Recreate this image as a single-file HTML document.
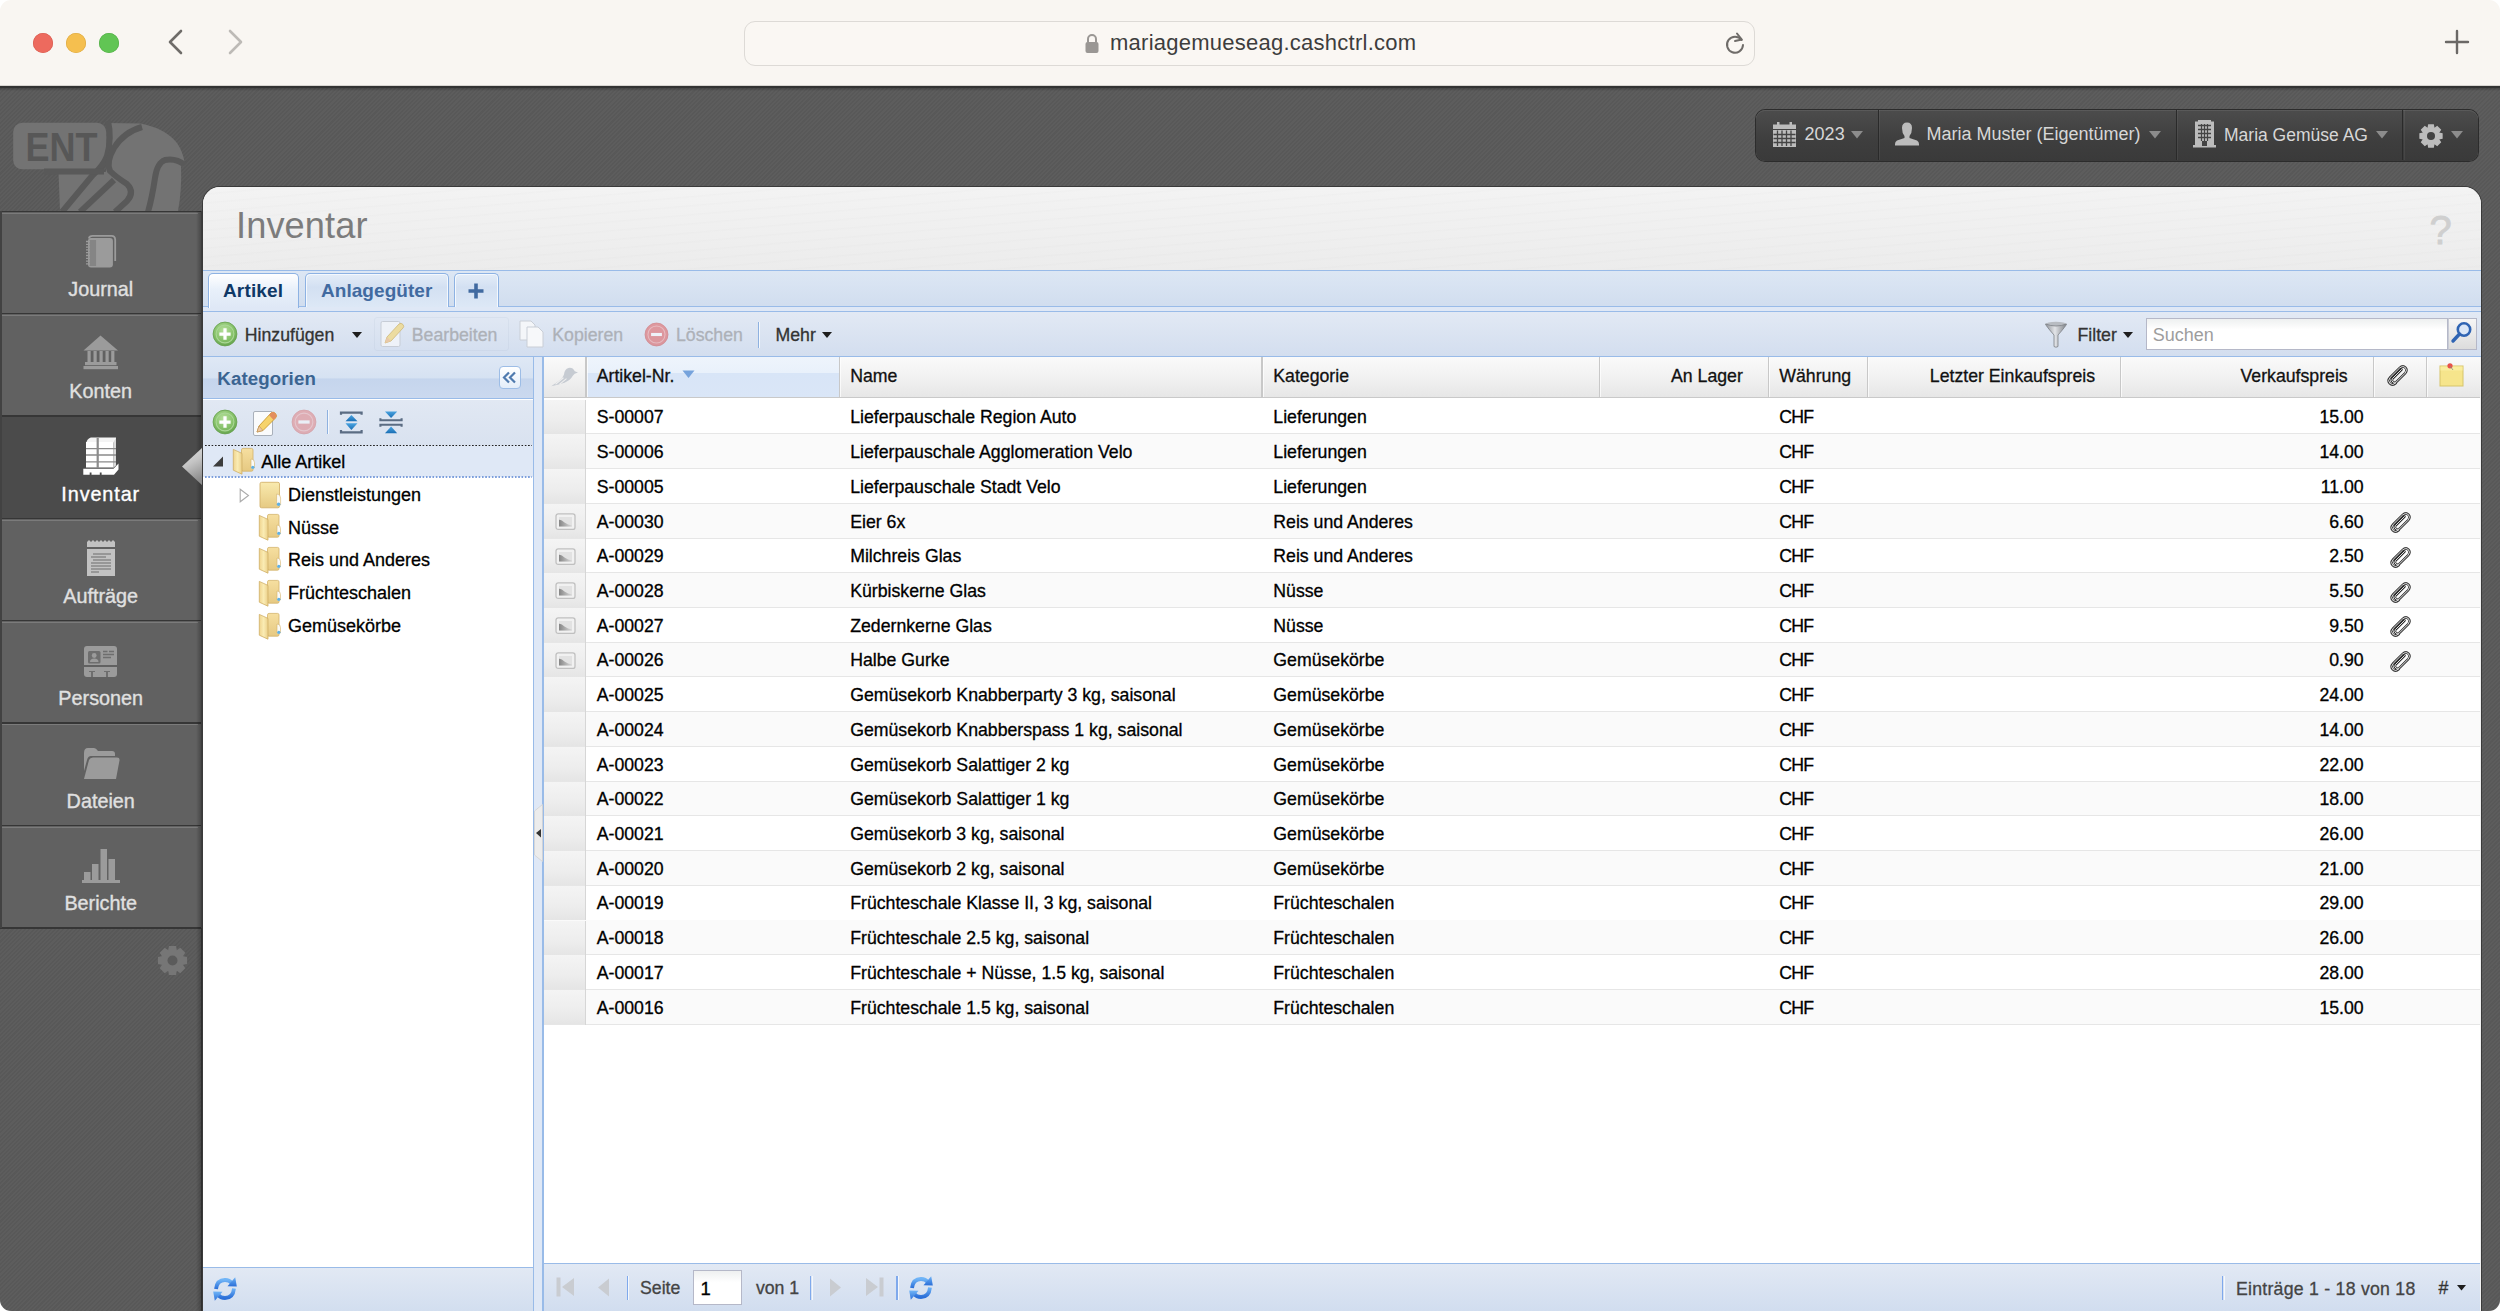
<!DOCTYPE html>
<html><head><meta charset="utf-8"><title>Inventar</title>
<style>
html,body{margin:0;padding:0;}
body{width:2500px;height:1311px;position:relative;overflow:hidden;background:#585858;font-family:"Liberation Sans",sans-serif;}
.t{position:absolute;white-space:nowrap;}
.g{-webkit-text-stroke:0.3px currentColor;}
.r{position:absolute;}
svg.r{overflow:visible;}
</style></head><body>

<div class="r" style="left:0.00px;top:0.00px;width:2500.00px;height:86.00px;background:#f9f6f2;"></div>
<div class="r" style="left:0.00px;top:85.00px;width:2500.00px;height:1.00px;background:#d8d5d1;"></div>
<div class="r" style="left:33.00px;top:33.00px;width:20.00px;height:20.00px;border-radius:50%;background:#ed6a5e;box-shadow:inset 0 0 0 0.6px #d65a4e;"></div>
<div class="r" style="left:66.00px;top:33.00px;width:20.00px;height:20.00px;border-radius:50%;background:#f5bf4f;box-shadow:inset 0 0 0 0.6px #dba73f;"></div>
<div class="r" style="left:99.00px;top:33.00px;width:20.00px;height:20.00px;border-radius:50%;background:#61c554;box-shadow:inset 0 0 0 0.6px #52ab45;"></div>
<svg class="r" style="left:165.00px;top:28.00px;" width="22" height="28" viewBox="0 0 22 28"><path d="M16 3 L5 14 L16 25" fill="none" stroke="#6f6c69" stroke-width="2.6" stroke-linecap="round" stroke-linejoin="round"/></svg>
<svg class="r" style="left:225.00px;top:28.00px;" width="22" height="28" viewBox="0 0 22 28"><path d="M5 3 L16 14 L5 25" fill="none" stroke="#bdbab6" stroke-width="2.6" stroke-linecap="round" stroke-linejoin="round"/></svg>
<div class="r" style="left:744.00px;top:20.50px;width:1011.00px;height:45.00px;border:1.5px solid #dddad6;border-radius:11px;box-sizing:border-box;background:#faf7f3;"></div>
<svg class="r" style="left:1084.00px;top:33.00px;" width="16" height="21" viewBox="0 0 16 21"><path d="M4 9 V6 A4 4 0 0 1 12 6 V9" fill="none" stroke="#9a9794" stroke-width="2"/><rect x="1.5" y="9" width="13" height="11" rx="2" fill="#9a9794"/></svg>
<div class="t " style="left:1110.00px;top:29.37px;font-size:22px;line-height:28px;color:#3d3d3d;font-weight:normal;letter-spacing:0.25px;">mariagemueseag.cashctrl.com</div>
<svg class="r" style="left:1724.00px;top:31.00px;" width="23" height="24" viewBox="0 0 23 24"><path d="M17.5 9 A8 8 0 1 0 19 14" fill="none" stroke="#6f6c69" stroke-width="2" stroke-linecap="round"/><path d="M13 2.5 L17.8 8.6 L11 10" fill="none" stroke="#6f6c69" stroke-width="2" stroke-linecap="round" stroke-linejoin="round"/></svg>
<svg class="r" style="left:2444.00px;top:29.00px;" width="26" height="26" viewBox="0 0 26 26"><path d="M13 2 V24 M2 13 H24" stroke="#6b6866" stroke-width="2.4" stroke-linecap="round"/></svg>
<div class="r" style="left:0.00px;top:86.00px;width:2500.00px;height:1225.00px;background:repeating-linear-gradient(135deg,rgba(255,255,255,0.018) 0px,rgba(255,255,255,0.018) 1.5px,rgba(0,0,0,0.02) 1.5px,rgba(0,0,0,0.02) 3px),#5a5a5a;"></div>
<div class="r" style="left:0.00px;top:86.00px;width:2500.00px;height:1.50px;background:#333;"></div>
<div class="r" style="left:0.00px;top:87.50px;width:2500.00px;height:3.00px;background:linear-gradient(rgba(0,0,0,0.25),rgba(0,0,0,0));"></div>
<svg class="r" style="left:0.00px;top:110.00px;" width="200" height="105" viewBox="0 110 200 105"><rect x="13.2" y="122.8" width="93" height="46.5" rx="9" fill="#737373"/><text x="25.5" y="161" font-family="Liberation Sans" font-weight="bold" font-size="41" fill="#575757" textLength="72" lengthAdjust="spacingAndGlyphs">ENT</text><path d="M58.5 172 L106 172 L107 123 L140 123.5 Q165 128 177 143 Q183 152 184.5 162 L184 167 L181 166 Q182 190 178 211 L60 211 Z" fill="#737373"/><g fill="none" stroke="#595959" stroke-width="6" stroke-linejoin="round"><path d="M108 121 Q112 138 107 156 Q103 166 92 176 L62 212"/><path d="M142 127 Q124 132 114 148 Q106 162 110 171 Q116 177 127 184 Q135 192 127 201 L115 212"/><path d="M44 171.5 L104 171.5"/><path d="M114 180 L80 212"/><path d="M185 165 Q176 158 165 160 Q157 163 155 178 Q152 198 148 212"/></g></svg>
<div class="r" style="left:0.00px;top:211.00px;width:202.00px;height:102.37px;background:#616161;"></div>
<div class="r" style="left:0.00px;top:210.50px;width:202.00px;height:1.50px;background:#363636;"></div>
<div class="r" style="left:2.00px;top:212.50px;width:196.00px;height:1.00px;background:#7b7b7b;"></div>
<div class="r" style="left:0.00px;top:313.37px;width:202.00px;height:102.37px;background:#616161;"></div>
<div class="r" style="left:0.00px;top:312.87px;width:202.00px;height:1.50px;background:#363636;"></div>
<div class="r" style="left:2.00px;top:314.87px;width:196.00px;height:1.00px;background:#7b7b7b;"></div>
<div class="r" style="left:0.00px;top:415.74px;width:202.00px;height:102.37px;background:#4b4b4b;"></div>
<div class="r" style="left:0.00px;top:415.24px;width:202.00px;height:1.50px;background:#363636;"></div>
<div class="r" style="left:0.00px;top:518.11px;width:202.00px;height:102.37px;background:#616161;"></div>
<div class="r" style="left:0.00px;top:517.61px;width:202.00px;height:1.50px;background:#363636;"></div>
<div class="r" style="left:2.00px;top:519.61px;width:196.00px;height:1.00px;background:#7b7b7b;"></div>
<div class="r" style="left:0.00px;top:620.48px;width:202.00px;height:102.37px;background:#616161;"></div>
<div class="r" style="left:0.00px;top:619.98px;width:202.00px;height:1.50px;background:#363636;"></div>
<div class="r" style="left:2.00px;top:621.98px;width:196.00px;height:1.00px;background:#7b7b7b;"></div>
<div class="r" style="left:0.00px;top:722.85px;width:202.00px;height:102.37px;background:#616161;"></div>
<div class="r" style="left:0.00px;top:722.35px;width:202.00px;height:1.50px;background:#363636;"></div>
<div class="r" style="left:2.00px;top:724.35px;width:196.00px;height:1.00px;background:#7b7b7b;"></div>
<div class="r" style="left:0.00px;top:825.22px;width:202.00px;height:102.37px;background:#616161;"></div>
<div class="r" style="left:0.00px;top:824.72px;width:202.00px;height:1.50px;background:#363636;"></div>
<div class="r" style="left:2.00px;top:826.72px;width:196.00px;height:1.00px;background:#7b7b7b;"></div>
<div class="r" style="left:0.00px;top:927.09px;width:202.00px;height:1.50px;background:#363636;"></div>
<div class="r" style="left:196.00px;top:211.00px;width:7.00px;height:716.59px;background:linear-gradient(to right,rgba(0,0,0,0),rgba(0,0,0,0.35));"></div>
<div class="r" style="left:201.00px;top:210.50px;width:2.00px;height:1101.00px;background:#3d3d3d;"></div>
<div class="r" style="left:0.00px;top:211.00px;width:1.60px;height:716.59px;background:#424242;"></div>
<div class="r" style="left:196.00px;top:928.00px;width:7.00px;height:383.00px;background:linear-gradient(to right,rgba(0,0,0,0),rgba(0,0,0,0.3));"></div>
<div class="t " style="left:-499.30px;width:1200px;text-align:center;top:276.94px;font-size:19.8px;line-height:25px;color:#e0e0e0;font-weight:normal;-webkit-text-stroke:0.35px #e0e0e0;">Journal</div>
<div class="t " style="left:-499.30px;width:1200px;text-align:center;top:379.31px;font-size:19.8px;line-height:25px;color:#e0e0e0;font-weight:normal;-webkit-text-stroke:0.35px #e0e0e0;">Konten</div>
<div class="t " style="left:-499.30px;width:1200px;text-align:center;top:481.68px;font-size:19.8px;line-height:25px;color:#ffffff;font-weight:normal;letter-spacing:0.9px;-webkit-text-stroke:0.35px #ffffff;">Inventar</div>
<div class="t " style="left:-499.30px;width:1200px;text-align:center;top:584.05px;font-size:19.8px;line-height:25px;color:#e0e0e0;font-weight:normal;-webkit-text-stroke:0.35px #e0e0e0;">Aufträge</div>
<div class="t " style="left:-499.30px;width:1200px;text-align:center;top:686.42px;font-size:19.8px;line-height:25px;color:#e0e0e0;font-weight:normal;-webkit-text-stroke:0.35px #e0e0e0;">Personen</div>
<div class="t " style="left:-499.30px;width:1200px;text-align:center;top:788.79px;font-size:19.8px;line-height:25px;color:#e0e0e0;font-weight:normal;-webkit-text-stroke:0.35px #e0e0e0;">Dateien</div>
<div class="t " style="left:-499.30px;width:1200px;text-align:center;top:891.16px;font-size:19.8px;line-height:25px;color:#e0e0e0;font-weight:normal;-webkit-text-stroke:0.35px #e0e0e0;">Berichte</div>
<svg class="r" style="left:84.00px;top:233.00px;" width="34" height="37" viewBox="0 0 34 37"><path d="M4.8 5.5 Q5.5 2.9 8.5 2.9 H27.5 Q31.2 2.9 31.2 6.8 V28" fill="none" stroke="#9b9b9b" stroke-width="1.8"/><rect x="4" y="5" width="24.9" height="29.6" rx="3" fill="#9b9b9b"/><rect x="5.6" y="7" width="6.5" height="26" fill="#858585"/><path d="M2 8.5 H6 M2 11.3 H6 M2 14.1 H6 M2 16.9 H6 M2 19.7 H6 M2 22.5 H6 M2 25.3 H6 M2 28.1 H6 M2 30.9 H6" stroke="#9b9b9b" stroke-width="1.3"/></svg>
<svg class="r" style="left:83.00px;top:335.00px;" width="36" height="35" viewBox="0 0 36 35"><path d="M17.5 0.5 L35 15.5 L0.5 15.5 Z" fill="#9b9b9b"/>
<rect x="4.5" y="16" width="3.2" height="11" fill="#9b9b9b"/><rect x="10.5" y="16" width="3.2" height="11" fill="#9b9b9b"/>
<rect x="16.5" y="16" width="3.2" height="11" fill="#9b9b9b"/><rect x="22.5" y="16" width="3.2" height="11" fill="#9b9b9b"/><rect x="28.2" y="16" width="3.2" height="11" fill="#9b9b9b"/>
<rect x="2" y="27" width="31.5" height="3.2" fill="#9b9b9b"/><rect x="0.5" y="31" width="34.5" height="3.2" fill="#9b9b9b"/></svg>
<svg class="r" style="left:82.00px;top:436.00px;" width="38" height="40" viewBox="0 0 38 40"><path d="M8.8 1.4 L34 1.4 L33.9 6.5 L4.5 6.5 Q4.5 3.5 8.8 1.4 Z" fill="#f4f4f4"/><rect x="4" y="6" width="27.2" height="25.5" fill="#fff"/><path d="M31.2 6.5 L34 2 V29.5 L31.2 32 Z" fill="#d9d9d9"/><path d="M4 12.6 H34 M4 19 H34 M4 25.9 H34" stroke="#8a8a8a" stroke-width="1.3"/><rect x="14.6" y="2" width="2.2" height="30" fill="#8c8c8c"/><path d="M1.3 32.8 H31.5 L36.5 27.5 V33.5 L32 38.8 H1.3 Z" fill="#fff"/><rect x="7.7" y="36.5" width="1.8" height="2.5" fill="#4b4b4b"/><rect x="17.8" y="36.5" width="1.8" height="2.5" fill="#4b4b4b"/></svg>
<svg class="r" style="left:86.00px;top:540.00px;" width="30" height="37" viewBox="0 0 30 37"><path d="M1 2 L3 0 L5 2 L7 0 L9 2 L11 0 L13 2 L15 0 L17 2 L19 0 L21 2 L23 0 L25 2 L27 0 L29 2 V7 H1 Z" fill="#c2c2c2"/>
<rect x="1" y="9" width="28" height="27" fill="#c2c2c2"/>
<path d="M7 14 H25 M5 17 H20 M7 20 H25 M5 23 H25 M5 26 H25 M5 29 H25 M5 32 H13" stroke="#6d6d6d" stroke-width="1.1"/></svg>
<svg class="r" style="left:83.00px;top:645.00px;" width="36" height="34" viewBox="0 0 36 34"><path d="M4 1 H31 Q34 1 34 4 V20 H1 V4 Q1 1 4 1 Z" fill="#9b9b9b"/>
<path d="M1 22 H34 V29 Q34 32 31 32 H4 Q1 32 1 29 Z" fill="#9b9b9b"/>
<rect x="5" y="6" width="12.5" height="12.5" rx="1.5" fill="#6e6e6e"/>
<circle cx="11.2" cy="10.5" r="2.4" fill="#9b9b9b"/><path d="M7 17 Q7 13.5 11.2 13.5 Q15.5 13.5 15.5 17 Z" fill="#9b9b9b"/>
<path d="M20 6.5 H24.5 M26 6.5 H31 M20 9.5 H31 M20 12.5 H28" stroke="#6e6e6e" stroke-width="1.6"/>
<path d="M6 26 H12 V27 H10 V32 H8 V27 H6 Z M21 26 H27 V27 H25 V32 H23 V27 H21 Z" fill="#6e6e6e"/></svg>
<svg class="r" style="left:82.00px;top:747.00px;" width="39" height="34" viewBox="0 0 39 34"><path d="M2 6 Q2 1 6 1 H12 Q14 1 16 4 H30 Q33 4 33 7 V9 H9 Q6 9 5 13 L2 24 Z" fill="#9b9b9b"/>
<path d="M7 13 Q8 10.5 11 10.5 H35 Q38 10.5 37.5 13.5 L34 32 H2 Z" fill="#9b9b9b"/></svg>
<svg class="r" style="left:81.00px;top:848.00px;" width="40" height="36" viewBox="0 0 40 36"><rect x="3" y="24" width="6.5" height="8" fill="#9b9b9b"/><rect x="11" y="16" width="6.5" height="16" fill="#9b9b9b"/>
<rect x="19.5" y="1" width="6.5" height="31" fill="#9b9b9b"/><rect x="27.5" y="11" width="6.5" height="21" fill="#9b9b9b"/>
<rect x="1" y="32" width="38" height="3" fill="#9b9b9b"/></svg>
<svg class="r" style="left:155.00px;top:943.00px;" width="36" height="36" viewBox="0 0 36 36"><path d="M32.07 13.93 L32.07 21.07 L27.36 21.90 L27.59 21.36 L30.32 25.28 L25.28 30.32 L21.36 27.59 L21.90 27.36 L21.07 32.07 L13.93 32.07 L13.10 27.36 L13.64 27.59 L9.72 30.32 L4.68 25.28 L7.41 21.36 L7.64 21.90 L2.93 21.07 L2.93 13.93 L7.64 13.10 L7.41 13.64 L4.68 9.72 L9.72 4.68 L13.64 7.41 L13.10 7.64 L13.93 2.93 L21.07 2.93 L21.90 7.64 L21.36 7.41 L25.28 4.68 L30.32 9.72 L27.59 13.64 L27.36 13.10 Z" fill="#767676"/><circle cx="17.5" cy="17.5" r="5" fill="#5b5b5b"/></svg>
<div class="r" style="left:1756.00px;top:109.50px;width:722.00px;height:51.00px;border-radius:9px;background:linear-gradient(#4c4c4c,#3e3e3e 60%,#3a3a3a);box-shadow:0 0 0 1px #2c2c2c, inset 0 1px 0 rgba(255,255,255,0.08);"></div>
<div class="r" style="left:1877.80px;top:110.00px;width:1.20px;height:50.00px;background:#2a2a2a;"></div>
<div class="r" style="left:1879.00px;top:110.00px;width:1.00px;height:50.00px;background:rgba(255,255,255,0.06);"></div>
<div class="r" style="left:2175.80px;top:110.00px;width:1.20px;height:50.00px;background:#2a2a2a;"></div>
<div class="r" style="left:2177.00px;top:110.00px;width:1.00px;height:50.00px;background:rgba(255,255,255,0.06);"></div>
<div class="r" style="left:2402.30px;top:110.00px;width:1.20px;height:50.00px;background:#2a2a2a;"></div>
<div class="r" style="left:2403.50px;top:110.00px;width:1.00px;height:50.00px;background:rgba(255,255,255,0.06);"></div>
<div class="t " style="left:1804.60px;top:123.46px;font-size:18px;line-height:22px;color:#d7d7d7;font-weight:normal;">2023</div>
<div class="t " style="left:1926.50px;top:123.46px;font-size:18px;line-height:22px;color:#d7d7d7;font-weight:normal;">Maria Muster (Eigentümer)</div>
<div class="t " style="left:2224.00px;top:123.63px;font-size:17.5px;line-height:22px;color:#d7d7d7;font-weight:normal;">Maria Gemüse AG</div>
<svg class="r" style="left:1851.00px;top:130.50px;" width="12" height="8" viewBox="0 0 12 8"><path d="M0 0 H12 L6 7.5 Z" fill="#8c8c8c"/></svg>
<svg class="r" style="left:2149.00px;top:130.50px;" width="12" height="8" viewBox="0 0 12 8"><path d="M0 0 H12 L6 7.5 Z" fill="#8c8c8c"/></svg>
<svg class="r" style="left:2375.50px;top:130.50px;" width="12" height="8" viewBox="0 0 12 8"><path d="M0 0 H12 L6 7.5 Z" fill="#8c8c8c"/></svg>
<svg class="r" style="left:2451.00px;top:130.50px;" width="12" height="8" viewBox="0 0 12 8"><path d="M0 0 H12 L6 7.5 Z" fill="#8c8c8c"/></svg>
<svg class="r" style="left:1772.00px;top:121.00px;" width="25" height="27" viewBox="0 0 25 27"><rect x="1" y="3.5" width="23" height="4.5" fill="#bcbcbc"/><rect x="5" y="1" width="2.5" height="4" fill="#bcbcbc"/><rect x="17.5" y="1" width="2.5" height="4" fill="#bcbcbc"/>
<rect x="1" y="9" width="23" height="17" fill="#bcbcbc"/>
<path d="M5.5 9.5 V25 M10 9.5 V25 M14.5 9.5 V25 M19 9.5 V25 M1.5 13.5 H23.5 M1.5 17.5 H23.5 M1.5 21.5 H23.5" stroke="#444" stroke-width="1.3"/></svg>
<svg class="r" style="left:1894.00px;top:122.00px;" width="26" height="25" viewBox="0 0 26 25"><path d="M13 0.5 Q18 0.5 18 6 Q18 11 15.5 14 V16 L23 18.5 Q25 19.5 25 22 V23.5 H1 V22 Q1 19.5 3 18.5 L10.5 16 V14 Q8 11 8 6 Q8 0.5 13 0.5 Z" fill="#bcbcbc"/></svg>
<svg class="r" style="left:2192.00px;top:120.00px;" width="25" height="28" viewBox="0 0 25 28"><rect x="3" y="1.5" width="19" height="24" fill="#bcbcbc"/><rect x="1" y="25" width="23" height="2.5" fill="#bcbcbc"/><rect x="6" y="0" width="13" height="2" fill="#bcbcbc"/>
<path d="M6 5.5 H19 M6 9.5 H19 M6 13.5 H19 M6 17.5 H19" stroke="#444" stroke-width="1.6"/><path d="M9.5 4 V21 M12.5 4 V21 M15.5 4 V21" stroke="#444" stroke-width="1.2"/>
<rect x="10" y="21" width="5" height="5" fill="#444"/></svg>
<svg class="r" style="left:2418.00px;top:123.00px;" width="26" height="26" viewBox="0 0 26 26"><path d="M24.66 10.15 L24.66 15.85 L20.89 16.52 L21.07 16.09 L23.26 19.23 L19.23 23.26 L16.09 21.07 L16.52 20.89 L15.85 24.66 L10.15 24.66 L9.48 20.89 L9.91 21.07 L6.77 23.26 L2.74 19.23 L4.93 16.09 L5.11 16.52 L1.34 15.85 L1.34 10.15 L5.11 9.48 L4.93 9.91 L2.74 6.77 L6.77 2.74 L9.91 4.93 L9.48 5.11 L10.15 1.34 L15.85 1.34 L16.52 5.11 L16.09 4.93 L19.23 2.74 L23.26 6.77 L21.07 9.91 L20.89 9.48 Z" fill="#bcbcbc"/><circle cx="13" cy="13" r="4" fill="#424242"/></svg>
<svg class="r" style="left:181.00px;top:446.00px;" width="23" height="41" viewBox="0 0 23 41"><defs><linearGradient id="sa" x1="0" y1="0" x2="0.3" y2="1"><stop offset="0" stop-color="#e2e2e2"/><stop offset="0.5" stop-color="#c4c4c4"/><stop offset="1" stop-color="#8e8e8e"/></linearGradient></defs><path d="M1 20.5 L21.5 1.5 V39.5 Z" fill="url(#sa)"/></svg>
<div class="r" style="left:203.00px;top:187.00px;width:2278.00px;height:1124.00px;border-radius:17px 17px 0 0;background:#efefef;box-shadow:0 0 0 1px #3a3a3a;"></div>
<div class="r" style="left:203.00px;top:187.00px;width:2278.00px;height:83.00px;border-radius:17px 17px 0 0;background:repeating-linear-gradient(175deg,rgba(255,255,255,0) 0px,rgba(255,255,255,0) 6px,rgba(0,0,0,0.012) 7px,rgba(0,0,0,0) 9px),linear-gradient(#f3f3f3,#ececec);"></div>
<div class="t " style="left:236.00px;top:203.25px;font-size:36.2px;line-height:45px;color:#7c7c7c;font-weight:normal;letter-spacing:0.1px;">Inventar</div>
<div class="t " style="left:1840.50px;width:1200px;text-align:center;top:204.63px;font-size:40px;line-height:50px;color:#cfcfcf;font-weight:normal;-webkit-text-stroke:0.8px #cfcfcf;">?</div>
<div class="r" style="left:203.00px;top:269.50px;width:2278.00px;height:42.00px;background:linear-gradient(#dde7f4,#cfdcee);"></div>
<div class="r" style="left:203.00px;top:269.50px;width:2278.00px;height:1.00px;background:#99bbe8;"></div>
<div class="r" style="left:203.00px;top:306.20px;width:2278.00px;height:1.00px;background:#99bbe8;"></div>
<div class="r" style="left:203.00px;top:307.20px;width:2278.00px;height:4.00px;background:#dfe8f6;"></div>
<div class="r" style="left:203.00px;top:311.20px;width:2278.00px;height:1.00px;background:#99bbe8;"></div>
<div class="r" style="left:207.70px;top:273.40px;width:91.80px;height:34.50px;border:1px solid #8db2e3;border-bottom:none;border-radius:5px 5px 0 0;box-sizing:border-box;background:linear-gradient(#ffffff,#e8f0fa 45%,#dfe8f6);box-shadow:inset 1px 1px 0 #fff;"></div>
<div class="r" style="left:305.00px;top:273.40px;width:143.50px;height:33.30px;border:1px solid #8db2e3;border-bottom:none;border-radius:5px 5px 0 0;box-sizing:border-box;background:linear-gradient(#e4edf8,#d3e0f2 40%,#dde8f6);box-shadow:inset 1px 1px 0 #f4f8fd,inset -1px 0 0 #f4f8fd;"></div>
<div class="r" style="left:454.00px;top:273.40px;width:45.00px;height:33.30px;border:1px solid #8db2e3;border-bottom:none;border-radius:5px 5px 0 0;box-sizing:border-box;background:linear-gradient(#e4edf8,#d3e0f2 40%,#dde8f6);box-shadow:inset 1px 1px 0 #f4f8fd,inset -1px 0 0 #f4f8fd;"></div>
<div class="t " style="left:223.00px;top:278.61px;font-size:19px;line-height:24px;color:#0e3866;font-weight:bold;letter-spacing:0.15px;">Artikel</div>
<div class="t " style="left:321.00px;top:278.61px;font-size:19px;line-height:24px;color:#416aa0;font-weight:bold;letter-spacing:0.05px;">Anlagegüter</div>
<svg class="r" style="left:466.00px;top:281.00px;" width="20" height="20" viewBox="0 0 20 20"><path d="M10 2.5 V17.5 M2.5 10 H17.5" stroke="#416aa0" stroke-width="3.6"/></svg>
<div class="r" style="left:203.00px;top:312.20px;width:2278.00px;height:44.00px;background:linear-gradient(#e2e9f4,#d3deef);"></div>
<div class="r" style="left:203.00px;top:355.80px;width:2278.00px;height:1.20px;background:#99bbe8;"></div>
<svg class="r" style="left:211.60px;top:321.00px;opacity:1" width="26" height="26" viewBox="0 0 24 24">
<defs><radialGradient id="gg224334" cx="0.45" cy="0.35" r="0.7"><stop offset="0" stop-color="#b6e09c"/><stop offset="0.6" stop-color="#86c169"/><stop offset="1" stop-color="#5f9e48"/></radialGradient></defs>
<circle cx="12" cy="12" r="11" fill="url(#gg224334)" stroke="#6aa252" stroke-width="0.8"/><circle cx="12" cy="12" r="8.2" fill="none" stroke="#a9d795" stroke-width="1"/>
<path d="M12 6.8 V17.2 M6.8 12 H17.2" stroke="#fff" stroke-width="3"/></svg>
<div class="t g" style="left:244.80px;top:323.66px;font-size:17.7px;line-height:22px;color:#333333;font-weight:normal;">Hinzufügen</div>
<svg class="r" style="left:351.50px;top:331.50px;" width="10" height="7" viewBox="0 0 10 7"><path d="M0 0 H10 L5 6 Z" fill="#1e1e1e"/></svg>
<div class="r" style="left:374.00px;top:317.00px;width:134.50px;height:34.00px;border:1px solid rgba(160,175,200,0.12);border-radius:3px;box-sizing:border-box;"></div>
<svg class="r" style="left:380.00px;top:320.00px;" width="26" height="28" viewBox="0 0 26 28"><rect x="1" y="1.5" width="19" height="25" rx="1.5" fill="#eef2f8" stroke="#c7cdd6" stroke-width="1"/>
<path d="M5 23 L7 17 L19 4 Q21 2.5 23 4.5 Q24.5 6.5 23 8 L11 21 Z" fill="#ecdca0" stroke="#cdb77a" stroke-width="0.8"/><path d="M5 23 L7 17 L11 21 Z" fill="#e9c9a8"/></svg>
<div class="t g" style="left:411.80px;top:323.66px;font-size:17.7px;line-height:22px;color:#adb1b8;font-weight:normal;">Bearbeiten</div>
<svg class="r" style="left:518.00px;top:319.00px;" width="28" height="30" viewBox="0 0 28 30"><path d="M2 2 H13 L17 6 V21 H2 Z" fill="#f4f6f9" stroke="#c9ced6" stroke-width="1"/>
<path d="M9 8 H20 L25 13 V28 H9 Z" fill="#f7f8fa" stroke="#c9ced6" stroke-width="1"/></svg>
<div class="t g" style="left:552.30px;top:323.66px;font-size:17.7px;line-height:22px;color:#adb1b8;font-weight:normal;">Kopieren</div>
<svg class="r" style="left:643.90px;top:321.50px;opacity:0.55" width="25.0" height="25.0" viewBox="0 0 24 24">
<circle cx="12" cy="12" r="11" fill="#e05a5a" stroke="#c94444" stroke-width="0.8"/><circle cx="12" cy="12" r="8.2" fill="none" stroke="#f09a9a" stroke-width="1"/>
<path d="M6.8 12 H17.2" stroke="#fff" stroke-width="3"/></svg>
<div class="t g" style="left:676.00px;top:323.66px;font-size:17.7px;line-height:22px;color:#adb1b8;font-weight:normal;">Löschen</div>
<div class="r" style="left:758.00px;top:322.00px;width:1.30px;height:26.00px;background:#8eb1e0;"></div>
<div class="r" style="left:759.30px;top:322.00px;width:1.00px;height:26.00px;background:#f4f8fd;"></div>
<div class="t g" style="left:775.50px;top:323.66px;font-size:17.7px;line-height:22px;color:#333333;font-weight:normal;">Mehr</div>
<svg class="r" style="left:821.50px;top:331.50px;" width="10" height="7" viewBox="0 0 10 7"><path d="M0 0 H10 L5 6 Z" fill="#1e1e1e"/></svg>
<svg class="r" style="left:2044.00px;top:321.00px;" width="24" height="28" viewBox="0 0 24 28"><defs><linearGradient id="fg" x1="0" x2="1"><stop offset="0" stop-color="#8f9399"/><stop offset="0.45" stop-color="#e2e4e8"/><stop offset="1" stop-color="#7d8187"/></linearGradient></defs>
<ellipse cx="12" cy="3" rx="10.5" ry="2.2" fill="#b8bcc2"/>
<path d="M1.5 3 Q2 5 10 14 V25.5 Q12 27 14 25.5 V14 Q22 5 22.5 3 Q12 7 1.5 3 Z" fill="url(#fg)" stroke="#7c8087" stroke-width="0.8"/></svg>
<div class="t g" style="left:2077.50px;top:323.66px;font-size:17.7px;line-height:22px;color:#333333;font-weight:normal;">Filter</div>
<svg class="r" style="left:2122.50px;top:332.00px;" width="10" height="7" viewBox="0 0 10 7"><path d="M0 0 H10 L5 6 Z" fill="#1e1e1e"/></svg>
<div class="r" style="left:2146.20px;top:317.90px;width:302.00px;height:32.20px;border:1px solid #b5b8c8;box-sizing:border-box;background:linear-gradient(#eef0f0,#ffffff 35%,#ffffff);"></div>
<div class="t " style="left:2152.80px;top:324.06px;font-size:18px;line-height:22px;color:#9d9d9d;font-weight:normal;">Suchen</div>
<div class="r" style="left:2447.50px;top:317.90px;width:29.00px;height:32.20px;border:1px solid #b5b8c8;border-left:1px solid #c8cbd6;box-sizing:border-box;background:linear-gradient(#f6f6f6,#dcdcdc);"></div>
<svg class="r" style="left:2450.00px;top:320.00px;" width="24" height="26" viewBox="0 0 24 26"><circle cx="14" cy="9.5" r="6.2" fill="#dbe7f7" stroke="#2f64b3" stroke-width="2.6"/>
<path d="M9.5 14 L3 21" stroke="#2f64b3" stroke-width="3.4" stroke-linecap="round"/></svg>
<div class="r" style="left:203.00px;top:357.00px;width:330.00px;height:910.00px;background:#ffffff;"></div>
<div class="r" style="left:203.00px;top:357.00px;width:330.00px;height:42.00px;background:linear-gradient(#dfe8f5,#d6e2f2 50%,#c5d5ed 52%,#cbd9ef);"></div>
<div class="r" style="left:203.00px;top:398.30px;width:330.00px;height:1.20px;background:#99bbe8;"></div>
<div class="r" style="left:532.50px;top:357.00px;width:2.00px;height:954.00px;background:#99bbe8;"></div>
<div class="t " style="left:217.30px;top:367.02px;font-size:18.7px;line-height:23px;color:#3b6491;font-weight:bold;letter-spacing:0.1px;">Kategorien</div>
<div class="r" style="left:498.50px;top:365.90px;width:22.30px;height:23.30px;border:1px solid #9dbde6;border-radius:4px;box-sizing:border-box;background:linear-gradient(#ffffff,#e3edf9);"></div>
<svg class="r" style="left:501.00px;top:369.00px;" width="17" height="17" viewBox="0 0 17 17"><path d="M8 3.5 L3 8.5 L8 13.5 M14 3.5 L9 8.5 L14 13.5" fill="none" stroke="#4f7aae" stroke-width="2.2"/></svg>
<div class="r" style="left:203.00px;top:399.50px;width:330.00px;height:45.00px;background:linear-gradient(#e1e8f3,#d9e2f0);"></div>
<svg class="r" style="left:211.50px;top:408.70px;opacity:1" width="26" height="26" viewBox="0 0 24 24">
<defs><radialGradient id="gg224421" cx="0.45" cy="0.35" r="0.7"><stop offset="0" stop-color="#b6e09c"/><stop offset="0.6" stop-color="#86c169"/><stop offset="1" stop-color="#5f9e48"/></radialGradient></defs>
<circle cx="12" cy="12" r="11" fill="url(#gg224421)" stroke="#6aa252" stroke-width="0.8"/><circle cx="12" cy="12" r="8.2" fill="none" stroke="#a9d795" stroke-width="1"/>
<path d="M12 6.8 V17.2 M6.8 12 H17.2" stroke="#fff" stroke-width="3"/></svg>
<svg class="r" style="left:252.00px;top:408.00px;" width="28" height="29" viewBox="0 0 28 29"><rect x="1.5" y="3.5" width="19" height="24" rx="1.5" fill="#fafbfc" stroke="#a9b0ba" stroke-width="1"/>
<path d="M5 24 L7 18 L19 5 Q21 3 23.5 5.5 Q25.5 8 23.5 10 L11 22.5 Z" fill="#f6d36b" stroke="#c99a2e" stroke-width="0.9"/><path d="M5 24 L7 18 L11 22.5 Z" fill="#f0c9a0" stroke="#b98d5e" stroke-width="0.6"/><path d="M19 5 Q21 3 23.5 5.5 Q25.5 8 23.5 10 L21.5 12 L17 7 Z" fill="#e38e5f"/></svg>
<svg class="r" style="left:291.30px;top:408.70px;opacity:0.4" width="26" height="26" viewBox="0 0 24 24">
<circle cx="12" cy="12" r="11" fill="#e05a5a" stroke="#c94444" stroke-width="0.8"/><circle cx="12" cy="12" r="8.2" fill="none" stroke="#f09a9a" stroke-width="1"/>
<path d="M6.8 12 H17.2" stroke="#fff" stroke-width="3"/></svg>
<div class="r" style="left:327.00px;top:410.00px;width:1.30px;height:24.00px;background:#8eb1e0;"></div>
<div class="r" style="left:328.30px;top:410.00px;width:1.00px;height:24.00px;background:#f4f8fd;"></div>
<svg class="r" style="left:339.00px;top:410.00px;" width="25" height="25" viewBox="0 0 25 25"><defs><linearGradient id="tb" x1="0" y1="0" x2="0" y2="1"><stop offset="0" stop-color="#4aa3e0"/><stop offset="1" stop-color="#1a6fb5"/></linearGradient></defs><path d="M2 4.8 V2.6 H22.6 V4.8 M2 20 V22.3 H22.6 V20" fill="none" stroke="#5b6c83" stroke-width="2.2"/><path d="M12.4 5 L18.5 11.3 H6.5 Z" fill="url(#tb)"/><path d="M12.4 19.9 L18.5 13.3 H6.5 Z" fill="url(#tb)"/></svg>
<svg class="r" style="left:378.00px;top:410.00px;" width="25" height="25" viewBox="0 0 25 25"><path d="M2.4 8.2 V10.2 H23.6 V8.2 M2.4 16.8 V14.8 H23.6 V16.8" fill="none" stroke="#5b6c83" stroke-width="2.1"/><path d="M7 1.4 H19.2 L13.1 8 Z" fill="url(#tb)"/><path d="M7 23.2 H19.2 L13.1 16.6 Z" fill="url(#tb)"/></svg>
<div class="r" style="left:203.00px;top:444.50px;width:329.50px;height:32.50px;background:#dfe8f6;"></div>
<div class="r" style="left:205.00px;top:444.80px;width:327.00px;height:1.40px;background-image:linear-gradient(to right,#222 48%,transparent 48%);background-size:3.3px 1.4px;"></div>
<div class="r" style="left:205.00px;top:476.20px;width:327.00px;height:1.40px;background-image:linear-gradient(to right,#7d9fdc 48%,transparent 48%);background-size:3.3px 1.4px;"></div>
<svg class="r" style="left:212.00px;top:456.00px;" width="12" height="11" viewBox="0 0 12 11"><path d="M11 0.5 V10.5 H1 Z" fill="#3d3d3d"/></svg>
<svg class="r" style="left:232.00px;top:447.00px" width="24" height="29" viewBox="0 0 24 29">
<defs><linearGradient id="fob" x1="0" y1="0" x2="0" y2="1"><stop offset="0" stop-color="#f6dfa0"/><stop offset="1" stop-color="#e6c982"/></linearGradient>
<linearGradient id="fof" x1="0" y1="0" x2="1" y2="0"><stop offset="0" stop-color="#f0d48e"/><stop offset="0.5" stop-color="#faecb4"/><stop offset="1" stop-color="#ebcf89"/></linearGradient></defs>
<rect x="9.5" y="1.4" width="11.5" height="22.8" rx="1.5" fill="url(#fob)" stroke="#d3b26a" stroke-width="0.8"/>
<path d="M1.3 2.4 L10 6.4 V27.2 L1.3 23.2 Z" fill="url(#fof)" stroke="#cfae66" stroke-width="0.8"/>
<path d="M19 12 Q22.5 12 22.5 15.5 V21 Q20.5 23.5 19 21 Z" fill="#fbfbf7" stroke="#d3b26a" stroke-width="0.6"/><circle cx="20.8" cy="20.3" r="1.6" fill="#5eb0e4"/></svg>
<div class="t g" style="left:261.30px;top:450.66px;font-size:18px;line-height:22px;color:#000;font-weight:normal;">Alle Artikel</div>
<svg class="r" style="left:239.00px;top:488.00px;" width="11" height="15" viewBox="0 0 11 15"><path d="M1.2 1.2 L9.5 7.5 L1.2 13.8 Z" fill="#fff" stroke="#ababab" stroke-width="1.1"/></svg>
<svg class="r" style="left:258.80px;top:480.60px" width="23" height="29" viewBox="0 0 23 29">
<defs><linearGradient id="fc258_480" x1="0" y1="0" x2="0" y2="1"><stop offset="0" stop-color="#f9eaae"/><stop offset="1" stop-color="#e6ca83"/></linearGradient></defs>
<rect x="1" y="1.3" width="19.5" height="25.5" rx="1.6" fill="url(#fc258_480)" stroke="#d4b26c" stroke-width="0.9"/>
<path d="M17.6 13 Q21.6 13 21.6 17 V24 Q19.4 26.4 17.6 24 Z" fill="#fbfbf7" stroke="#d4b26c" stroke-width="0.6"/><circle cx="19.6" cy="23.3" r="1.7" fill="#5eb0e4"/></svg>
<div class="t g" style="left:287.90px;top:483.56px;font-size:18px;line-height:22px;color:#000;font-weight:normal;">Dienstleistungen</div>
<svg class="r" style="left:258.30px;top:513.15px" width="24" height="29" viewBox="0 0 24 29">
<defs><linearGradient id="fob" x1="0" y1="0" x2="0" y2="1"><stop offset="0" stop-color="#f6dfa0"/><stop offset="1" stop-color="#e6c982"/></linearGradient>
<linearGradient id="fof" x1="0" y1="0" x2="1" y2="0"><stop offset="0" stop-color="#f0d48e"/><stop offset="0.5" stop-color="#faecb4"/><stop offset="1" stop-color="#ebcf89"/></linearGradient></defs>
<rect x="9.5" y="1.4" width="11.5" height="22.8" rx="1.5" fill="url(#fob)" stroke="#d3b26a" stroke-width="0.8"/>
<path d="M1.3 2.4 L10 6.4 V27.2 L1.3 23.2 Z" fill="url(#fof)" stroke="#cfae66" stroke-width="0.8"/>
<path d="M19 12 Q22.5 12 22.5 15.5 V21 Q20.5 23.5 19 21 Z" fill="#fbfbf7" stroke="#d3b26a" stroke-width="0.6"/><circle cx="20.8" cy="20.3" r="1.6" fill="#5eb0e4"/></svg>
<div class="t g" style="left:287.90px;top:516.51px;font-size:18px;line-height:22px;color:#000;font-weight:normal;">Nüsse</div>
<svg class="r" style="left:258.30px;top:546.10px" width="24" height="29" viewBox="0 0 24 29">
<defs><linearGradient id="fob" x1="0" y1="0" x2="0" y2="1"><stop offset="0" stop-color="#f6dfa0"/><stop offset="1" stop-color="#e6c982"/></linearGradient>
<linearGradient id="fof" x1="0" y1="0" x2="1" y2="0"><stop offset="0" stop-color="#f0d48e"/><stop offset="0.5" stop-color="#faecb4"/><stop offset="1" stop-color="#ebcf89"/></linearGradient></defs>
<rect x="9.5" y="1.4" width="11.5" height="22.8" rx="1.5" fill="url(#fob)" stroke="#d3b26a" stroke-width="0.8"/>
<path d="M1.3 2.4 L10 6.4 V27.2 L1.3 23.2 Z" fill="url(#fof)" stroke="#cfae66" stroke-width="0.8"/>
<path d="M19 12 Q22.5 12 22.5 15.5 V21 Q20.5 23.5 19 21 Z" fill="#fbfbf7" stroke="#d3b26a" stroke-width="0.6"/><circle cx="20.8" cy="20.3" r="1.6" fill="#5eb0e4"/></svg>
<div class="t g" style="left:287.90px;top:549.46px;font-size:18px;line-height:22px;color:#000;font-weight:normal;">Reis und Anderes</div>
<svg class="r" style="left:258.30px;top:579.05px" width="24" height="29" viewBox="0 0 24 29">
<defs><linearGradient id="fob" x1="0" y1="0" x2="0" y2="1"><stop offset="0" stop-color="#f6dfa0"/><stop offset="1" stop-color="#e6c982"/></linearGradient>
<linearGradient id="fof" x1="0" y1="0" x2="1" y2="0"><stop offset="0" stop-color="#f0d48e"/><stop offset="0.5" stop-color="#faecb4"/><stop offset="1" stop-color="#ebcf89"/></linearGradient></defs>
<rect x="9.5" y="1.4" width="11.5" height="22.8" rx="1.5" fill="url(#fob)" stroke="#d3b26a" stroke-width="0.8"/>
<path d="M1.3 2.4 L10 6.4 V27.2 L1.3 23.2 Z" fill="url(#fof)" stroke="#cfae66" stroke-width="0.8"/>
<path d="M19 12 Q22.5 12 22.5 15.5 V21 Q20.5 23.5 19 21 Z" fill="#fbfbf7" stroke="#d3b26a" stroke-width="0.6"/><circle cx="20.8" cy="20.3" r="1.6" fill="#5eb0e4"/></svg>
<div class="t g" style="left:287.90px;top:582.41px;font-size:18px;line-height:22px;color:#000;font-weight:normal;">Früchteschalen</div>
<svg class="r" style="left:258.30px;top:612.00px" width="24" height="29" viewBox="0 0 24 29">
<defs><linearGradient id="fob" x1="0" y1="0" x2="0" y2="1"><stop offset="0" stop-color="#f6dfa0"/><stop offset="1" stop-color="#e6c982"/></linearGradient>
<linearGradient id="fof" x1="0" y1="0" x2="1" y2="0"><stop offset="0" stop-color="#f0d48e"/><stop offset="0.5" stop-color="#faecb4"/><stop offset="1" stop-color="#ebcf89"/></linearGradient></defs>
<rect x="9.5" y="1.4" width="11.5" height="22.8" rx="1.5" fill="url(#fob)" stroke="#d3b26a" stroke-width="0.8"/>
<path d="M1.3 2.4 L10 6.4 V27.2 L1.3 23.2 Z" fill="url(#fof)" stroke="#cfae66" stroke-width="0.8"/>
<path d="M19 12 Q22.5 12 22.5 15.5 V21 Q20.5 23.5 19 21 Z" fill="#fbfbf7" stroke="#d3b26a" stroke-width="0.6"/><circle cx="20.8" cy="20.3" r="1.6" fill="#5eb0e4"/></svg>
<div class="t g" style="left:287.90px;top:615.36px;font-size:18px;line-height:22px;color:#000;font-weight:normal;">Gemüsekörbe</div>
<div class="r" style="left:203.00px;top:1266.80px;width:330.00px;height:44.20px;background:linear-gradient(#e2e9f4,#d2deef);"></div>
<div class="r" style="left:203.00px;top:1266.50px;width:330.00px;height:1.20px;background:#99bbe8;"></div>
<svg class="r" style="left:212.00px;top:1276.00px" width="26" height="26" viewBox="0 0 26 26">
<defs><linearGradient id="rf212" x1="0" y1="0" x2="0" y2="1"><stop offset="0" stop-color="#6fb4f7"/><stop offset="1" stop-color="#2b6fd8"/></linearGradient></defs>
<path d="M4 13 Q5 4 13 4 Q17.5 4 19.8 7.2" fill="none" stroke="url(#rf212)" stroke-width="3.8"/><path d="M15.5 10.2 L24.8 10.4 L23.2 1.2 Z" fill="url(#rf212)"/>
<path d="M22 12.5 Q21 22 13 22 Q8.5 22 6.2 18.8" fill="none" stroke="url(#rf212)" stroke-width="3.8"/><path d="M10.5 15.8 L1.2 15.6 L2.8 24.8 Z" fill="url(#rf212)"/>
</svg>
<div class="r" style="left:534.00px;top:357.00px;width:9.50px;height:954.00px;background:#dfe8f6;"></div>
<div class="r" style="left:542.30px;top:357.00px;width:1.70px;height:954.00px;background:#99bbe8;"></div>
<svg class="r" style="left:534.00px;top:804.00px;" width="9" height="58" viewBox="0 0 9 58"><path d="M0.5 7 L8.5 0.5 V57.5 L0.5 51 Z" fill="#ececec" stroke="#d2d2d2" stroke-width="0.8"/><path d="M2 29 L7 25 V33.5 Z" fill="#333"/></svg>
<div class="r" style="left:544.00px;top:357.00px;width:1936.00px;height:907.00px;background:#ffffff;"></div>
<div class="r" style="left:544.00px;top:357.00px;width:1936.00px;height:40.50px;background:linear-gradient(#fafafa,#f1f1f1 50%,#e6e6e6);"></div>
<div class="r" style="left:586.00px;top:357.00px;width:253.20px;height:40.50px;background:linear-gradient(#eef4fc,#e9f1fb 38%,#d8e5f7 40%,#dae6f7);"></div>
<div class="r" style="left:544.00px;top:397.00px;width:1936.00px;height:1.30px;background:#c9c9c9;"></div>
<div class="r" style="left:585.40px;top:357.00px;width:1.30px;height:40.50px;background:#c8c8c8;"></div>
<div class="r" style="left:586.60px;top:358.00px;width:1.00px;height:39.00px;background:rgba(255,255,255,0.7);"></div>
<div class="r" style="left:838.60px;top:357.00px;width:1.30px;height:40.50px;background:#c8c8c8;"></div>
<div class="r" style="left:839.80px;top:358.00px;width:1.00px;height:39.00px;background:rgba(255,255,255,0.7);"></div>
<div class="r" style="left:1261.40px;top:357.00px;width:1.30px;height:40.50px;background:#c8c8c8;"></div>
<div class="r" style="left:1262.60px;top:358.00px;width:1.00px;height:39.00px;background:rgba(255,255,255,0.7);"></div>
<div class="r" style="left:1598.80px;top:357.00px;width:1.30px;height:40.50px;background:#c8c8c8;"></div>
<div class="r" style="left:1600.00px;top:358.00px;width:1.00px;height:39.00px;background:rgba(255,255,255,0.7);"></div>
<div class="r" style="left:1767.80px;top:357.00px;width:1.30px;height:40.50px;background:#c8c8c8;"></div>
<div class="r" style="left:1769.00px;top:358.00px;width:1.00px;height:39.00px;background:rgba(255,255,255,0.7);"></div>
<div class="r" style="left:1866.80px;top:357.00px;width:1.30px;height:40.50px;background:#c8c8c8;"></div>
<div class="r" style="left:1868.00px;top:358.00px;width:1.00px;height:39.00px;background:rgba(255,255,255,0.7);"></div>
<div class="r" style="left:2119.70px;top:357.00px;width:1.30px;height:40.50px;background:#c8c8c8;"></div>
<div class="r" style="left:2120.90px;top:358.00px;width:1.00px;height:39.00px;background:rgba(255,255,255,0.7);"></div>
<div class="r" style="left:2372.90px;top:357.00px;width:1.30px;height:40.50px;background:#c8c8c8;"></div>
<div class="r" style="left:2374.10px;top:358.00px;width:1.00px;height:39.00px;background:rgba(255,255,255,0.7);"></div>
<div class="r" style="left:2425.50px;top:357.00px;width:1.30px;height:40.50px;background:#c8c8c8;"></div>
<div class="r" style="left:2426.70px;top:358.00px;width:1.00px;height:39.00px;background:rgba(255,255,255,0.7);"></div>
<div class="t g" style="left:596.70px;top:365.26px;font-size:17.7px;line-height:22px;color:#111;font-weight:normal;">Artikel-Nr.</div>
<svg class="r" style="left:681.50px;top:369.50px;" width="13" height="9" viewBox="0 0 13 9"><path d="M0.5 0.5 H12.5 L6.5 8 Z" fill="#76a3dc"/></svg>
<div class="t g" style="left:850.20px;top:365.26px;font-size:17.7px;line-height:22px;color:#111;font-weight:normal;">Name</div>
<div class="t g" style="left:1273.30px;top:365.26px;font-size:17.7px;line-height:22px;color:#111;font-weight:normal;">Kategorie</div>
<div class="t g" style="left:542.80px;width:1200px;text-align:right;top:365.26px;font-size:17.7px;line-height:22px;color:#111;font-weight:normal;">An Lager</div>
<div class="t g" style="left:1779.30px;top:365.26px;font-size:17.7px;line-height:22px;color:#111;font-weight:normal;">Währung</div>
<div class="t g" style="left:895.00px;width:1200px;text-align:right;top:365.26px;font-size:17.7px;line-height:22px;color:#111;font-weight:normal;">Letzter Einkaufspreis</div>
<div class="t g" style="left:1147.70px;width:1200px;text-align:right;top:365.26px;font-size:17.7px;line-height:22px;color:#111;font-weight:normal;">Verkaufspreis</div>
<svg class="r" style="left:550.00px;top:366.00px;" width="29" height="21" viewBox="0 0 29 21"><path d="M28 6.4 L24.8 5.2 Q22.5 1 18.5 2 Q14.5 3.2 14 8.5 Q13.2 12 9 14.8 L1.2 20.2 Q9.5 18.8 14.5 16.8 Q20.5 14.2 22.8 9.8 Q24 7.4 28 6.4 Z" fill="#c6cbd2"/><path d="M5.5 18.2 L13.5 11.8 M9.5 18.3 L16.5 12.6" stroke="#eeeeee" stroke-width="1.1"/></svg>
<svg class="r" style="left:2387.00px;top:363.50px" width="21" height="22" viewBox="0 0 21 22">
<path d="M14.5 5.5 L5.5 14.5 Q4 16.5 5.8 18 Q7.5 19.5 9.5 17.8 L18 9.3 Q20.8 6.2 18.4 3.6 Q15.8 1 12.8 3.8 L3.2 13.4 Q0.2 16.8 2.8 19.4 Q5.6 22 8.8 19" fill="none" stroke="#2e2e2e" stroke-width="2.5" stroke-linecap="round"/>
<path d="M14.5 5.5 L5.5 14.5 Q4 16.5 5.8 18 Q7.5 19.5 9.5 17.8 L18 9.3 Q20.8 6.2 18.4 3.6 Q15.8 1 12.8 3.8 L3.2 13.4 Q0.2 16.8 2.8 19.4 Q5.6 22 8.8 19" fill="none" stroke="#f7f7f7" stroke-width="0.9" stroke-linecap="round"/></svg>
<svg class="r" style="left:2438.50px;top:363.00px;" width="25" height="24" viewBox="0 0 25 24"><rect x="1" y="3" width="23" height="20" fill="#f6e58c" stroke="#d6c46a" stroke-width="1"/><rect x="1.5" y="3.5" width="22" height="4" fill="#f9ee9f"/><circle cx="11" cy="2.8" r="2.6" fill="#e8524a"/><path d="M11 3 L14 7" stroke="#888" stroke-width="0.8"/></svg>
<div class="r" style="left:544.00px;top:400.00px;width:1936.00px;height:34.00px;background:#ffffff;"></div>
<div class="r" style="left:544.00px;top:433.00px;width:1936.00px;height:1.00px;background:#e6e6e6;"></div>
<div class="r" style="left:544.00px;top:399.70px;width:41.50px;height:34.22px;background:linear-gradient(#f4f4f4,#ededed 60%,#e5e5e5);"></div>
<div class="r" style="left:585.30px;top:399.70px;width:1.20px;height:34.72px;background:#d6d6d6;"></div>
<div class="t g" style="left:596.70px;top:406.36px;font-size:17.7px;line-height:22px;color:#000;font-weight:normal;">S-00007</div>
<div class="t g" style="left:850.20px;top:406.36px;font-size:17.7px;line-height:22px;color:#000;font-weight:normal;">Lieferpauschale Region Auto</div>
<div class="t g" style="left:1273.30px;top:406.36px;font-size:17.7px;line-height:22px;color:#000;font-weight:normal;">Lieferungen</div>
<div class="t g" style="left:1779.30px;top:406.36px;font-size:17.7px;line-height:22px;color:#000;font-weight:normal;letter-spacing:-0.8px;">CHF</div>
<div class="t g" style="left:1163.70px;width:1200px;text-align:right;top:406.36px;font-size:17.7px;line-height:22px;color:#000;font-weight:normal;">15.00</div>
<div class="r" style="left:544.00px;top:434.00px;width:1936.00px;height:35.00px;background:#fafafa;"></div>
<div class="r" style="left:544.00px;top:468.00px;width:1936.00px;height:1.00px;background:#e6e6e6;"></div>
<div class="r" style="left:544.00px;top:434.42px;width:41.50px;height:34.22px;background:linear-gradient(#f4f4f4,#ededed 60%,#e5e5e5);"></div>
<div class="r" style="left:585.30px;top:434.42px;width:1.20px;height:34.72px;background:#d6d6d6;"></div>
<div class="t g" style="left:596.70px;top:441.08px;font-size:17.7px;line-height:22px;color:#000;font-weight:normal;">S-00006</div>
<div class="t g" style="left:850.20px;top:441.08px;font-size:17.7px;line-height:22px;color:#000;font-weight:normal;">Lieferpauschale Agglomeration Velo</div>
<div class="t g" style="left:1273.30px;top:441.08px;font-size:17.7px;line-height:22px;color:#000;font-weight:normal;">Lieferungen</div>
<div class="t g" style="left:1779.30px;top:441.08px;font-size:17.7px;line-height:22px;color:#000;font-weight:normal;letter-spacing:-0.8px;">CHF</div>
<div class="t g" style="left:1163.70px;width:1200px;text-align:right;top:441.08px;font-size:17.7px;line-height:22px;color:#000;font-weight:normal;">14.00</div>
<div class="r" style="left:544.00px;top:469.00px;width:1936.00px;height:35.00px;background:#ffffff;"></div>
<div class="r" style="left:544.00px;top:503.00px;width:1936.00px;height:1.00px;background:#e6e6e6;"></div>
<div class="r" style="left:544.00px;top:469.14px;width:41.50px;height:34.22px;background:linear-gradient(#f4f4f4,#ededed 60%,#e5e5e5);"></div>
<div class="r" style="left:585.30px;top:469.14px;width:1.20px;height:34.72px;background:#d6d6d6;"></div>
<div class="t g" style="left:596.70px;top:475.80px;font-size:17.7px;line-height:22px;color:#000;font-weight:normal;">S-00005</div>
<div class="t g" style="left:850.20px;top:475.80px;font-size:17.7px;line-height:22px;color:#000;font-weight:normal;">Lieferpauschale Stadt Velo</div>
<div class="t g" style="left:1273.30px;top:475.80px;font-size:17.7px;line-height:22px;color:#000;font-weight:normal;">Lieferungen</div>
<div class="t g" style="left:1779.30px;top:475.80px;font-size:17.7px;line-height:22px;color:#000;font-weight:normal;letter-spacing:-0.8px;">CHF</div>
<div class="t g" style="left:1163.70px;width:1200px;text-align:right;top:475.80px;font-size:17.7px;line-height:22px;color:#000;font-weight:normal;">11.00</div>
<div class="r" style="left:544.00px;top:504.00px;width:1936.00px;height:35.00px;background:#fafafa;"></div>
<div class="r" style="left:544.00px;top:538.00px;width:1936.00px;height:1.00px;background:#e6e6e6;"></div>
<div class="r" style="left:544.00px;top:503.86px;width:41.50px;height:34.22px;background:linear-gradient(#f4f4f4,#ededed 60%,#e5e5e5);"></div>
<div class="r" style="left:585.30px;top:503.86px;width:1.20px;height:34.72px;background:#d6d6d6;"></div>
<div class="t g" style="left:596.70px;top:510.52px;font-size:17.7px;line-height:22px;color:#000;font-weight:normal;">A-00030</div>
<div class="t g" style="left:850.20px;top:510.52px;font-size:17.7px;line-height:22px;color:#000;font-weight:normal;">Eier 6x</div>
<div class="t g" style="left:1273.30px;top:510.52px;font-size:17.7px;line-height:22px;color:#000;font-weight:normal;">Reis und Anderes</div>
<div class="t g" style="left:1779.30px;top:510.52px;font-size:17.7px;line-height:22px;color:#000;font-weight:normal;letter-spacing:-0.8px;">CHF</div>
<div class="t g" style="left:1163.70px;width:1200px;text-align:right;top:510.52px;font-size:17.7px;line-height:22px;color:#000;font-weight:normal;">6.60</div>
<svg class="r" style="left:554.50px;top:512.86px;" width="21" height="17" viewBox="0 0 21 17"><defs><linearGradient id="im1" x1="0" x2="1"><stop offset="0" stop-color="#858585"/><stop offset="1" stop-color="#dadada"/></linearGradient></defs><rect x="1" y="0.8" width="19" height="15.6" rx="2.2" fill="#f1f1f1" stroke="#c0c0c0" stroke-width="1.3"/><rect x="4" y="4" width="13" height="9.6" fill="#e2e2e2"/><path d="M4 6.8 Q6.5 6.5 9.5 9.5 Q13 12 17 12.4 V13.6 H4 Z" fill="url(#im1)"/></svg>
<svg class="r" style="left:2390.00px;top:511.26px" width="21" height="22" viewBox="0 0 21 22">
<path d="M14.5 5.5 L5.5 14.5 Q4 16.5 5.8 18 Q7.5 19.5 9.5 17.8 L18 9.3 Q20.8 6.2 18.4 3.6 Q15.8 1 12.8 3.8 L3.2 13.4 Q0.2 16.8 2.8 19.4 Q5.6 22 8.8 19" fill="none" stroke="#2e2e2e" stroke-width="2.5" stroke-linecap="round"/>
<path d="M14.5 5.5 L5.5 14.5 Q4 16.5 5.8 18 Q7.5 19.5 9.5 17.8 L18 9.3 Q20.8 6.2 18.4 3.6 Q15.8 1 12.8 3.8 L3.2 13.4 Q0.2 16.8 2.8 19.4 Q5.6 22 8.8 19" fill="none" stroke="#f7f7f7" stroke-width="0.9" stroke-linecap="round"/></svg>
<div class="r" style="left:544.00px;top:539.00px;width:1936.00px;height:34.00px;background:#ffffff;"></div>
<div class="r" style="left:544.00px;top:572.00px;width:1936.00px;height:1.00px;background:#e6e6e6;"></div>
<div class="r" style="left:544.00px;top:538.58px;width:41.50px;height:34.22px;background:linear-gradient(#f4f4f4,#ededed 60%,#e5e5e5);"></div>
<div class="r" style="left:585.30px;top:538.58px;width:1.20px;height:34.72px;background:#d6d6d6;"></div>
<div class="t g" style="left:596.70px;top:545.24px;font-size:17.7px;line-height:22px;color:#000;font-weight:normal;">A-00029</div>
<div class="t g" style="left:850.20px;top:545.24px;font-size:17.7px;line-height:22px;color:#000;font-weight:normal;">Milchreis Glas</div>
<div class="t g" style="left:1273.30px;top:545.24px;font-size:17.7px;line-height:22px;color:#000;font-weight:normal;">Reis und Anderes</div>
<div class="t g" style="left:1779.30px;top:545.24px;font-size:17.7px;line-height:22px;color:#000;font-weight:normal;letter-spacing:-0.8px;">CHF</div>
<div class="t g" style="left:1163.70px;width:1200px;text-align:right;top:545.24px;font-size:17.7px;line-height:22px;color:#000;font-weight:normal;">2.50</div>
<svg class="r" style="left:554.50px;top:547.58px;" width="21" height="17" viewBox="0 0 21 17"><defs><linearGradient id="im1" x1="0" x2="1"><stop offset="0" stop-color="#858585"/><stop offset="1" stop-color="#dadada"/></linearGradient></defs><rect x="1" y="0.8" width="19" height="15.6" rx="2.2" fill="#f1f1f1" stroke="#c0c0c0" stroke-width="1.3"/><rect x="4" y="4" width="13" height="9.6" fill="#e2e2e2"/><path d="M4 6.8 Q6.5 6.5 9.5 9.5 Q13 12 17 12.4 V13.6 H4 Z" fill="url(#im1)"/></svg>
<svg class="r" style="left:2390.00px;top:545.98px" width="21" height="22" viewBox="0 0 21 22">
<path d="M14.5 5.5 L5.5 14.5 Q4 16.5 5.8 18 Q7.5 19.5 9.5 17.8 L18 9.3 Q20.8 6.2 18.4 3.6 Q15.8 1 12.8 3.8 L3.2 13.4 Q0.2 16.8 2.8 19.4 Q5.6 22 8.8 19" fill="none" stroke="#2e2e2e" stroke-width="2.5" stroke-linecap="round"/>
<path d="M14.5 5.5 L5.5 14.5 Q4 16.5 5.8 18 Q7.5 19.5 9.5 17.8 L18 9.3 Q20.8 6.2 18.4 3.6 Q15.8 1 12.8 3.8 L3.2 13.4 Q0.2 16.8 2.8 19.4 Q5.6 22 8.8 19" fill="none" stroke="#f7f7f7" stroke-width="0.9" stroke-linecap="round"/></svg>
<div class="r" style="left:544.00px;top:573.00px;width:1936.00px;height:35.00px;background:#fafafa;"></div>
<div class="r" style="left:544.00px;top:607.00px;width:1936.00px;height:1.00px;background:#e6e6e6;"></div>
<div class="r" style="left:544.00px;top:573.30px;width:41.50px;height:34.22px;background:linear-gradient(#f4f4f4,#ededed 60%,#e5e5e5);"></div>
<div class="r" style="left:585.30px;top:573.30px;width:1.20px;height:34.72px;background:#d6d6d6;"></div>
<div class="t g" style="left:596.70px;top:579.96px;font-size:17.7px;line-height:22px;color:#000;font-weight:normal;">A-00028</div>
<div class="t g" style="left:850.20px;top:579.96px;font-size:17.7px;line-height:22px;color:#000;font-weight:normal;">Kürbiskerne Glas</div>
<div class="t g" style="left:1273.30px;top:579.96px;font-size:17.7px;line-height:22px;color:#000;font-weight:normal;">Nüsse</div>
<div class="t g" style="left:1779.30px;top:579.96px;font-size:17.7px;line-height:22px;color:#000;font-weight:normal;letter-spacing:-0.8px;">CHF</div>
<div class="t g" style="left:1163.70px;width:1200px;text-align:right;top:579.96px;font-size:17.7px;line-height:22px;color:#000;font-weight:normal;">5.50</div>
<svg class="r" style="left:554.50px;top:582.30px;" width="21" height="17" viewBox="0 0 21 17"><defs><linearGradient id="im1" x1="0" x2="1"><stop offset="0" stop-color="#858585"/><stop offset="1" stop-color="#dadada"/></linearGradient></defs><rect x="1" y="0.8" width="19" height="15.6" rx="2.2" fill="#f1f1f1" stroke="#c0c0c0" stroke-width="1.3"/><rect x="4" y="4" width="13" height="9.6" fill="#e2e2e2"/><path d="M4 6.8 Q6.5 6.5 9.5 9.5 Q13 12 17 12.4 V13.6 H4 Z" fill="url(#im1)"/></svg>
<svg class="r" style="left:2390.00px;top:580.70px" width="21" height="22" viewBox="0 0 21 22">
<path d="M14.5 5.5 L5.5 14.5 Q4 16.5 5.8 18 Q7.5 19.5 9.5 17.8 L18 9.3 Q20.8 6.2 18.4 3.6 Q15.8 1 12.8 3.8 L3.2 13.4 Q0.2 16.8 2.8 19.4 Q5.6 22 8.8 19" fill="none" stroke="#2e2e2e" stroke-width="2.5" stroke-linecap="round"/>
<path d="M14.5 5.5 L5.5 14.5 Q4 16.5 5.8 18 Q7.5 19.5 9.5 17.8 L18 9.3 Q20.8 6.2 18.4 3.6 Q15.8 1 12.8 3.8 L3.2 13.4 Q0.2 16.8 2.8 19.4 Q5.6 22 8.8 19" fill="none" stroke="#f7f7f7" stroke-width="0.9" stroke-linecap="round"/></svg>
<div class="r" style="left:544.00px;top:608.00px;width:1936.00px;height:35.00px;background:#ffffff;"></div>
<div class="r" style="left:544.00px;top:642.00px;width:1936.00px;height:1.00px;background:#e6e6e6;"></div>
<div class="r" style="left:544.00px;top:608.02px;width:41.50px;height:34.22px;background:linear-gradient(#f4f4f4,#ededed 60%,#e5e5e5);"></div>
<div class="r" style="left:585.30px;top:608.02px;width:1.20px;height:34.72px;background:#d6d6d6;"></div>
<div class="t g" style="left:596.70px;top:614.68px;font-size:17.7px;line-height:22px;color:#000;font-weight:normal;">A-00027</div>
<div class="t g" style="left:850.20px;top:614.68px;font-size:17.7px;line-height:22px;color:#000;font-weight:normal;">Zedernkerne Glas</div>
<div class="t g" style="left:1273.30px;top:614.68px;font-size:17.7px;line-height:22px;color:#000;font-weight:normal;">Nüsse</div>
<div class="t g" style="left:1779.30px;top:614.68px;font-size:17.7px;line-height:22px;color:#000;font-weight:normal;letter-spacing:-0.8px;">CHF</div>
<div class="t g" style="left:1163.70px;width:1200px;text-align:right;top:614.68px;font-size:17.7px;line-height:22px;color:#000;font-weight:normal;">9.50</div>
<svg class="r" style="left:554.50px;top:617.02px;" width="21" height="17" viewBox="0 0 21 17"><defs><linearGradient id="im1" x1="0" x2="1"><stop offset="0" stop-color="#858585"/><stop offset="1" stop-color="#dadada"/></linearGradient></defs><rect x="1" y="0.8" width="19" height="15.6" rx="2.2" fill="#f1f1f1" stroke="#c0c0c0" stroke-width="1.3"/><rect x="4" y="4" width="13" height="9.6" fill="#e2e2e2"/><path d="M4 6.8 Q6.5 6.5 9.5 9.5 Q13 12 17 12.4 V13.6 H4 Z" fill="url(#im1)"/></svg>
<svg class="r" style="left:2390.00px;top:615.42px" width="21" height="22" viewBox="0 0 21 22">
<path d="M14.5 5.5 L5.5 14.5 Q4 16.5 5.8 18 Q7.5 19.5 9.5 17.8 L18 9.3 Q20.8 6.2 18.4 3.6 Q15.8 1 12.8 3.8 L3.2 13.4 Q0.2 16.8 2.8 19.4 Q5.6 22 8.8 19" fill="none" stroke="#2e2e2e" stroke-width="2.5" stroke-linecap="round"/>
<path d="M14.5 5.5 L5.5 14.5 Q4 16.5 5.8 18 Q7.5 19.5 9.5 17.8 L18 9.3 Q20.8 6.2 18.4 3.6 Q15.8 1 12.8 3.8 L3.2 13.4 Q0.2 16.8 2.8 19.4 Q5.6 22 8.8 19" fill="none" stroke="#f7f7f7" stroke-width="0.9" stroke-linecap="round"/></svg>
<div class="r" style="left:544.00px;top:643.00px;width:1936.00px;height:34.00px;background:#fafafa;"></div>
<div class="r" style="left:544.00px;top:676.00px;width:1936.00px;height:1.00px;background:#e6e6e6;"></div>
<div class="r" style="left:544.00px;top:642.74px;width:41.50px;height:34.22px;background:linear-gradient(#f4f4f4,#ededed 60%,#e5e5e5);"></div>
<div class="r" style="left:585.30px;top:642.74px;width:1.20px;height:34.72px;background:#d6d6d6;"></div>
<div class="t g" style="left:596.70px;top:649.40px;font-size:17.7px;line-height:22px;color:#000;font-weight:normal;">A-00026</div>
<div class="t g" style="left:850.20px;top:649.40px;font-size:17.7px;line-height:22px;color:#000;font-weight:normal;">Halbe Gurke</div>
<div class="t g" style="left:1273.30px;top:649.40px;font-size:17.7px;line-height:22px;color:#000;font-weight:normal;">Gemüsekörbe</div>
<div class="t g" style="left:1779.30px;top:649.40px;font-size:17.7px;line-height:22px;color:#000;font-weight:normal;letter-spacing:-0.8px;">CHF</div>
<div class="t g" style="left:1163.70px;width:1200px;text-align:right;top:649.40px;font-size:17.7px;line-height:22px;color:#000;font-weight:normal;">0.90</div>
<svg class="r" style="left:554.50px;top:651.74px;" width="21" height="17" viewBox="0 0 21 17"><defs><linearGradient id="im1" x1="0" x2="1"><stop offset="0" stop-color="#858585"/><stop offset="1" stop-color="#dadada"/></linearGradient></defs><rect x="1" y="0.8" width="19" height="15.6" rx="2.2" fill="#f1f1f1" stroke="#c0c0c0" stroke-width="1.3"/><rect x="4" y="4" width="13" height="9.6" fill="#e2e2e2"/><path d="M4 6.8 Q6.5 6.5 9.5 9.5 Q13 12 17 12.4 V13.6 H4 Z" fill="url(#im1)"/></svg>
<svg class="r" style="left:2390.00px;top:650.14px" width="21" height="22" viewBox="0 0 21 22">
<path d="M14.5 5.5 L5.5 14.5 Q4 16.5 5.8 18 Q7.5 19.5 9.5 17.8 L18 9.3 Q20.8 6.2 18.4 3.6 Q15.8 1 12.8 3.8 L3.2 13.4 Q0.2 16.8 2.8 19.4 Q5.6 22 8.8 19" fill="none" stroke="#2e2e2e" stroke-width="2.5" stroke-linecap="round"/>
<path d="M14.5 5.5 L5.5 14.5 Q4 16.5 5.8 18 Q7.5 19.5 9.5 17.8 L18 9.3 Q20.8 6.2 18.4 3.6 Q15.8 1 12.8 3.8 L3.2 13.4 Q0.2 16.8 2.8 19.4 Q5.6 22 8.8 19" fill="none" stroke="#f7f7f7" stroke-width="0.9" stroke-linecap="round"/></svg>
<div class="r" style="left:544.00px;top:677.00px;width:1936.00px;height:35.00px;background:#ffffff;"></div>
<div class="r" style="left:544.00px;top:711.00px;width:1936.00px;height:1.00px;background:#e6e6e6;"></div>
<div class="r" style="left:544.00px;top:677.46px;width:41.50px;height:34.22px;background:linear-gradient(#f4f4f4,#ededed 60%,#e5e5e5);"></div>
<div class="r" style="left:585.30px;top:677.46px;width:1.20px;height:34.72px;background:#d6d6d6;"></div>
<div class="t g" style="left:596.70px;top:684.12px;font-size:17.7px;line-height:22px;color:#000;font-weight:normal;">A-00025</div>
<div class="t g" style="left:850.20px;top:684.12px;font-size:17.7px;line-height:22px;color:#000;font-weight:normal;">Gemüsekorb Knabberparty 3 kg, saisonal</div>
<div class="t g" style="left:1273.30px;top:684.12px;font-size:17.7px;line-height:22px;color:#000;font-weight:normal;">Gemüsekörbe</div>
<div class="t g" style="left:1779.30px;top:684.12px;font-size:17.7px;line-height:22px;color:#000;font-weight:normal;letter-spacing:-0.8px;">CHF</div>
<div class="t g" style="left:1163.70px;width:1200px;text-align:right;top:684.12px;font-size:17.7px;line-height:22px;color:#000;font-weight:normal;">24.00</div>
<div class="r" style="left:544.00px;top:712.00px;width:1936.00px;height:35.00px;background:#fafafa;"></div>
<div class="r" style="left:544.00px;top:746.00px;width:1936.00px;height:1.00px;background:#e6e6e6;"></div>
<div class="r" style="left:544.00px;top:712.18px;width:41.50px;height:34.22px;background:linear-gradient(#f4f4f4,#ededed 60%,#e5e5e5);"></div>
<div class="r" style="left:585.30px;top:712.18px;width:1.20px;height:34.72px;background:#d6d6d6;"></div>
<div class="t g" style="left:596.70px;top:718.84px;font-size:17.7px;line-height:22px;color:#000;font-weight:normal;">A-00024</div>
<div class="t g" style="left:850.20px;top:718.84px;font-size:17.7px;line-height:22px;color:#000;font-weight:normal;">Gemüsekorb Knabberspass 1 kg, saisonal</div>
<div class="t g" style="left:1273.30px;top:718.84px;font-size:17.7px;line-height:22px;color:#000;font-weight:normal;">Gemüsekörbe</div>
<div class="t g" style="left:1779.30px;top:718.84px;font-size:17.7px;line-height:22px;color:#000;font-weight:normal;letter-spacing:-0.8px;">CHF</div>
<div class="t g" style="left:1163.70px;width:1200px;text-align:right;top:718.84px;font-size:17.7px;line-height:22px;color:#000;font-weight:normal;">14.00</div>
<div class="r" style="left:544.00px;top:747.00px;width:1936.00px;height:35.00px;background:#ffffff;"></div>
<div class="r" style="left:544.00px;top:781.00px;width:1936.00px;height:1.00px;background:#e6e6e6;"></div>
<div class="r" style="left:544.00px;top:746.90px;width:41.50px;height:34.22px;background:linear-gradient(#f4f4f4,#ededed 60%,#e5e5e5);"></div>
<div class="r" style="left:585.30px;top:746.90px;width:1.20px;height:34.72px;background:#d6d6d6;"></div>
<div class="t g" style="left:596.70px;top:753.56px;font-size:17.7px;line-height:22px;color:#000;font-weight:normal;">A-00023</div>
<div class="t g" style="left:850.20px;top:753.56px;font-size:17.7px;line-height:22px;color:#000;font-weight:normal;">Gemüsekorb Salattiger 2 kg</div>
<div class="t g" style="left:1273.30px;top:753.56px;font-size:17.7px;line-height:22px;color:#000;font-weight:normal;">Gemüsekörbe</div>
<div class="t g" style="left:1779.30px;top:753.56px;font-size:17.7px;line-height:22px;color:#000;font-weight:normal;letter-spacing:-0.8px;">CHF</div>
<div class="t g" style="left:1163.70px;width:1200px;text-align:right;top:753.56px;font-size:17.7px;line-height:22px;color:#000;font-weight:normal;">22.00</div>
<div class="r" style="left:544.00px;top:782.00px;width:1936.00px;height:34.00px;background:#fafafa;"></div>
<div class="r" style="left:544.00px;top:815.00px;width:1936.00px;height:1.00px;background:#e6e6e6;"></div>
<div class="r" style="left:544.00px;top:781.62px;width:41.50px;height:34.22px;background:linear-gradient(#f4f4f4,#ededed 60%,#e5e5e5);"></div>
<div class="r" style="left:585.30px;top:781.62px;width:1.20px;height:34.72px;background:#d6d6d6;"></div>
<div class="t g" style="left:596.70px;top:788.28px;font-size:17.7px;line-height:22px;color:#000;font-weight:normal;">A-00022</div>
<div class="t g" style="left:850.20px;top:788.28px;font-size:17.7px;line-height:22px;color:#000;font-weight:normal;">Gemüsekorb Salattiger 1 kg</div>
<div class="t g" style="left:1273.30px;top:788.28px;font-size:17.7px;line-height:22px;color:#000;font-weight:normal;">Gemüsekörbe</div>
<div class="t g" style="left:1779.30px;top:788.28px;font-size:17.7px;line-height:22px;color:#000;font-weight:normal;letter-spacing:-0.8px;">CHF</div>
<div class="t g" style="left:1163.70px;width:1200px;text-align:right;top:788.28px;font-size:17.7px;line-height:22px;color:#000;font-weight:normal;">18.00</div>
<div class="r" style="left:544.00px;top:816.00px;width:1936.00px;height:35.00px;background:#ffffff;"></div>
<div class="r" style="left:544.00px;top:850.00px;width:1936.00px;height:1.00px;background:#e6e6e6;"></div>
<div class="r" style="left:544.00px;top:816.34px;width:41.50px;height:34.22px;background:linear-gradient(#f4f4f4,#ededed 60%,#e5e5e5);"></div>
<div class="r" style="left:585.30px;top:816.34px;width:1.20px;height:34.72px;background:#d6d6d6;"></div>
<div class="t g" style="left:596.70px;top:823.00px;font-size:17.7px;line-height:22px;color:#000;font-weight:normal;">A-00021</div>
<div class="t g" style="left:850.20px;top:823.00px;font-size:17.7px;line-height:22px;color:#000;font-weight:normal;">Gemüsekorb 3 kg, saisonal</div>
<div class="t g" style="left:1273.30px;top:823.00px;font-size:17.7px;line-height:22px;color:#000;font-weight:normal;">Gemüsekörbe</div>
<div class="t g" style="left:1779.30px;top:823.00px;font-size:17.7px;line-height:22px;color:#000;font-weight:normal;letter-spacing:-0.8px;">CHF</div>
<div class="t g" style="left:1163.70px;width:1200px;text-align:right;top:823.00px;font-size:17.7px;line-height:22px;color:#000;font-weight:normal;">26.00</div>
<div class="r" style="left:544.00px;top:851.00px;width:1936.00px;height:35.00px;background:#fafafa;"></div>
<div class="r" style="left:544.00px;top:885.00px;width:1936.00px;height:1.00px;background:#e6e6e6;"></div>
<div class="r" style="left:544.00px;top:851.06px;width:41.50px;height:34.22px;background:linear-gradient(#f4f4f4,#ededed 60%,#e5e5e5);"></div>
<div class="r" style="left:585.30px;top:851.06px;width:1.20px;height:34.72px;background:#d6d6d6;"></div>
<div class="t g" style="left:596.70px;top:857.72px;font-size:17.7px;line-height:22px;color:#000;font-weight:normal;">A-00020</div>
<div class="t g" style="left:850.20px;top:857.72px;font-size:17.7px;line-height:22px;color:#000;font-weight:normal;">Gemüsekorb 2 kg, saisonal</div>
<div class="t g" style="left:1273.30px;top:857.72px;font-size:17.7px;line-height:22px;color:#000;font-weight:normal;">Gemüsekörbe</div>
<div class="t g" style="left:1779.30px;top:857.72px;font-size:17.7px;line-height:22px;color:#000;font-weight:normal;letter-spacing:-0.8px;">CHF</div>
<div class="t g" style="left:1163.70px;width:1200px;text-align:right;top:857.72px;font-size:17.7px;line-height:22px;color:#000;font-weight:normal;">21.00</div>
<div class="r" style="left:544.00px;top:886.00px;width:1936.00px;height:34.00px;background:#ffffff;"></div>
<div class="r" style="left:544.00px;top:920.00px;width:1936.00px;height:1.00px;background:#e6e6e6;"></div>
<div class="r" style="left:544.00px;top:885.78px;width:41.50px;height:34.22px;background:linear-gradient(#f4f4f4,#ededed 60%,#e5e5e5);"></div>
<div class="r" style="left:585.30px;top:885.78px;width:1.20px;height:34.72px;background:#d6d6d6;"></div>
<div class="t g" style="left:596.70px;top:892.44px;font-size:17.7px;line-height:22px;color:#000;font-weight:normal;">A-00019</div>
<div class="t g" style="left:850.20px;top:892.44px;font-size:17.7px;line-height:22px;color:#000;font-weight:normal;">Früchteschale Klasse II, 3 kg, saisonal</div>
<div class="t g" style="left:1273.30px;top:892.44px;font-size:17.7px;line-height:22px;color:#000;font-weight:normal;">Früchteschalen</div>
<div class="t g" style="left:1779.30px;top:892.44px;font-size:17.7px;line-height:22px;color:#000;font-weight:normal;letter-spacing:-0.8px;">CHF</div>
<div class="t g" style="left:1163.70px;width:1200px;text-align:right;top:892.44px;font-size:17.7px;line-height:22px;color:#000;font-weight:normal;">29.00</div>
<div class="r" style="left:544.00px;top:920.00px;width:1936.00px;height:35.00px;background:#fafafa;"></div>
<div class="r" style="left:544.00px;top:954.00px;width:1936.00px;height:1.00px;background:#e6e6e6;"></div>
<div class="r" style="left:544.00px;top:920.50px;width:41.50px;height:34.22px;background:linear-gradient(#f4f4f4,#ededed 60%,#e5e5e5);"></div>
<div class="r" style="left:585.30px;top:920.50px;width:1.20px;height:34.72px;background:#d6d6d6;"></div>
<div class="t g" style="left:596.70px;top:927.16px;font-size:17.7px;line-height:22px;color:#000;font-weight:normal;">A-00018</div>
<div class="t g" style="left:850.20px;top:927.16px;font-size:17.7px;line-height:22px;color:#000;font-weight:normal;">Früchteschale 2.5 kg, saisonal</div>
<div class="t g" style="left:1273.30px;top:927.16px;font-size:17.7px;line-height:22px;color:#000;font-weight:normal;">Früchteschalen</div>
<div class="t g" style="left:1779.30px;top:927.16px;font-size:17.7px;line-height:22px;color:#000;font-weight:normal;letter-spacing:-0.8px;">CHF</div>
<div class="t g" style="left:1163.70px;width:1200px;text-align:right;top:927.16px;font-size:17.7px;line-height:22px;color:#000;font-weight:normal;">26.00</div>
<div class="r" style="left:544.00px;top:955.00px;width:1936.00px;height:35.00px;background:#ffffff;"></div>
<div class="r" style="left:544.00px;top:989.00px;width:1936.00px;height:1.00px;background:#e6e6e6;"></div>
<div class="r" style="left:544.00px;top:955.22px;width:41.50px;height:34.22px;background:linear-gradient(#f4f4f4,#ededed 60%,#e5e5e5);"></div>
<div class="r" style="left:585.30px;top:955.22px;width:1.20px;height:34.72px;background:#d6d6d6;"></div>
<div class="t g" style="left:596.70px;top:961.88px;font-size:17.7px;line-height:22px;color:#000;font-weight:normal;">A-00017</div>
<div class="t g" style="left:850.20px;top:961.88px;font-size:17.7px;line-height:22px;color:#000;font-weight:normal;">Früchteschale + Nüsse, 1.5 kg, saisonal</div>
<div class="t g" style="left:1273.30px;top:961.88px;font-size:17.7px;line-height:22px;color:#000;font-weight:normal;">Früchteschalen</div>
<div class="t g" style="left:1779.30px;top:961.88px;font-size:17.7px;line-height:22px;color:#000;font-weight:normal;letter-spacing:-0.8px;">CHF</div>
<div class="t g" style="left:1163.70px;width:1200px;text-align:right;top:961.88px;font-size:17.7px;line-height:22px;color:#000;font-weight:normal;">28.00</div>
<div class="r" style="left:544.00px;top:990.00px;width:1936.00px;height:35.00px;background:#fafafa;"></div>
<div class="r" style="left:544.00px;top:1024.00px;width:1936.00px;height:1.00px;background:#e6e6e6;"></div>
<div class="r" style="left:544.00px;top:989.94px;width:41.50px;height:34.22px;background:linear-gradient(#f4f4f4,#ededed 60%,#e5e5e5);"></div>
<div class="r" style="left:585.30px;top:989.94px;width:1.20px;height:34.72px;background:#d6d6d6;"></div>
<div class="t g" style="left:596.70px;top:996.60px;font-size:17.7px;line-height:22px;color:#000;font-weight:normal;">A-00016</div>
<div class="t g" style="left:850.20px;top:996.60px;font-size:17.7px;line-height:22px;color:#000;font-weight:normal;">Früchteschale 1.5 kg, saisonal</div>
<div class="t g" style="left:1273.30px;top:996.60px;font-size:17.7px;line-height:22px;color:#000;font-weight:normal;">Früchteschalen</div>
<div class="t g" style="left:1779.30px;top:996.60px;font-size:17.7px;line-height:22px;color:#000;font-weight:normal;letter-spacing:-0.8px;">CHF</div>
<div class="t g" style="left:1163.70px;width:1200px;text-align:right;top:996.60px;font-size:17.7px;line-height:22px;color:#000;font-weight:normal;">15.00</div>
<div class="r" style="left:544.00px;top:1263.20px;width:1936.00px;height:47.80px;background:linear-gradient(#e2e9f4,#d1ddef);"></div>
<div class="r" style="left:544.00px;top:1263.00px;width:1936.00px;height:1.20px;background:#99bbe8;"></div>
<svg class="r" style="left:556.00px;top:1277.00px;" width="19" height="20" viewBox="0 0 19 20"><rect x="0.5" y="0.5" width="4" height="19" fill="#c9ccd1"/><path d="M18 1 V19 L6 10 Z" fill="#c9ccd1"/></svg>
<svg class="r" style="left:597.00px;top:1278.00px;" width="13" height="19" viewBox="0 0 13 19"><path d="M12 0.5 V18.5 L1 9.5 Z" fill="#c9ccd1"/></svg>
<div class="r" style="left:626.80px;top:1276.00px;width:1.30px;height:23.50px;background:#7fa9ec;"></div>
<div class="r" style="left:628.10px;top:1276.00px;width:1.00px;height:23.50px;background:#f4f8fd;"></div>
<div class="t g" style="left:640.00px;top:1277.46px;font-size:17.7px;line-height:22px;color:#444;font-weight:normal;">Seite</div>
<div class="r" style="left:692.90px;top:1270.10px;width:48.70px;height:35.30px;border:1px solid #b5b8c8;box-sizing:border-box;background:linear-gradient(#eef0f0,#ffffff 35%);"></div>
<div class="t g" style="left:700.40px;top:1276.89px;font-size:18.5px;line-height:23px;color:#000;font-weight:normal;">1</div>
<div class="t g" style="left:755.90px;top:1277.46px;font-size:17.7px;line-height:22px;color:#444;font-weight:normal;">von 1</div>
<div class="r" style="left:810.20px;top:1276.00px;width:1.30px;height:23.50px;background:#7fa9ec;"></div>
<div class="r" style="left:811.50px;top:1276.00px;width:1.00px;height:23.50px;background:#f4f8fd;"></div>
<svg class="r" style="left:829.00px;top:1278.00px;" width="13" height="19" viewBox="0 0 13 19"><path d="M1 0.5 V18.5 L12 9.5 Z" fill="#c9ccd1"/></svg>
<svg class="r" style="left:865.00px;top:1277.00px;" width="19" height="20" viewBox="0 0 19 20"><path d="M1 1 V19 L13 10 Z" fill="#c9ccd1"/><rect x="14.5" y="0.5" width="4" height="19" fill="#c9ccd1"/></svg>
<div class="r" style="left:896.40px;top:1276.00px;width:1.30px;height:23.50px;background:#7fa9ec;"></div>
<div class="r" style="left:897.70px;top:1276.00px;width:1.00px;height:23.50px;background:#f4f8fd;"></div>
<svg class="r" style="left:908.00px;top:1275.00px" width="26" height="26" viewBox="0 0 26 26">
<defs><linearGradient id="rf908" x1="0" y1="0" x2="0" y2="1"><stop offset="0" stop-color="#6fb4f7"/><stop offset="1" stop-color="#2b6fd8"/></linearGradient></defs>
<path d="M4 13 Q5 4 13 4 Q17.5 4 19.8 7.2" fill="none" stroke="url(#rf908)" stroke-width="3.8"/><path d="M15.5 10.2 L24.8 10.4 L23.2 1.2 Z" fill="url(#rf908)"/>
<path d="M22 12.5 Q21 22 13 22 Q8.5 22 6.2 18.8" fill="none" stroke="url(#rf908)" stroke-width="3.8"/><path d="M10.5 15.8 L1.2 15.6 L2.8 24.8 Z" fill="url(#rf908)"/>
</svg>
<div class="r" style="left:2222.20px;top:1276.00px;width:1.30px;height:23.50px;background:#7fa9ec;"></div>
<div class="r" style="left:2223.50px;top:1276.00px;width:1.00px;height:23.50px;background:#f4f8fd;"></div>
<div class="t g" style="left:2236.00px;top:1277.76px;font-size:17.7px;line-height:22px;color:#444;font-weight:normal;letter-spacing:0.25px;">Einträge 1 - 18 von 18</div>
<div class="t g" style="left:2438.50px;top:1277.46px;font-size:17.7px;line-height:22px;color:#333;font-weight:normal;">#</div>
<svg class="r" style="left:2456.50px;top:1285.00px;" width="9" height="6" viewBox="0 0 9 6"><path d="M0 0 H9 L4.5 5.5 Z" fill="#1e1e1e"/></svg>
<div class="r" style="left:0.00px;top:0.00px;width:2500.00px;height:1311.00px;border-radius:11px;box-shadow:0 0 0 40px #ffffff;pointer-events:none;"></div>
</body></html>
